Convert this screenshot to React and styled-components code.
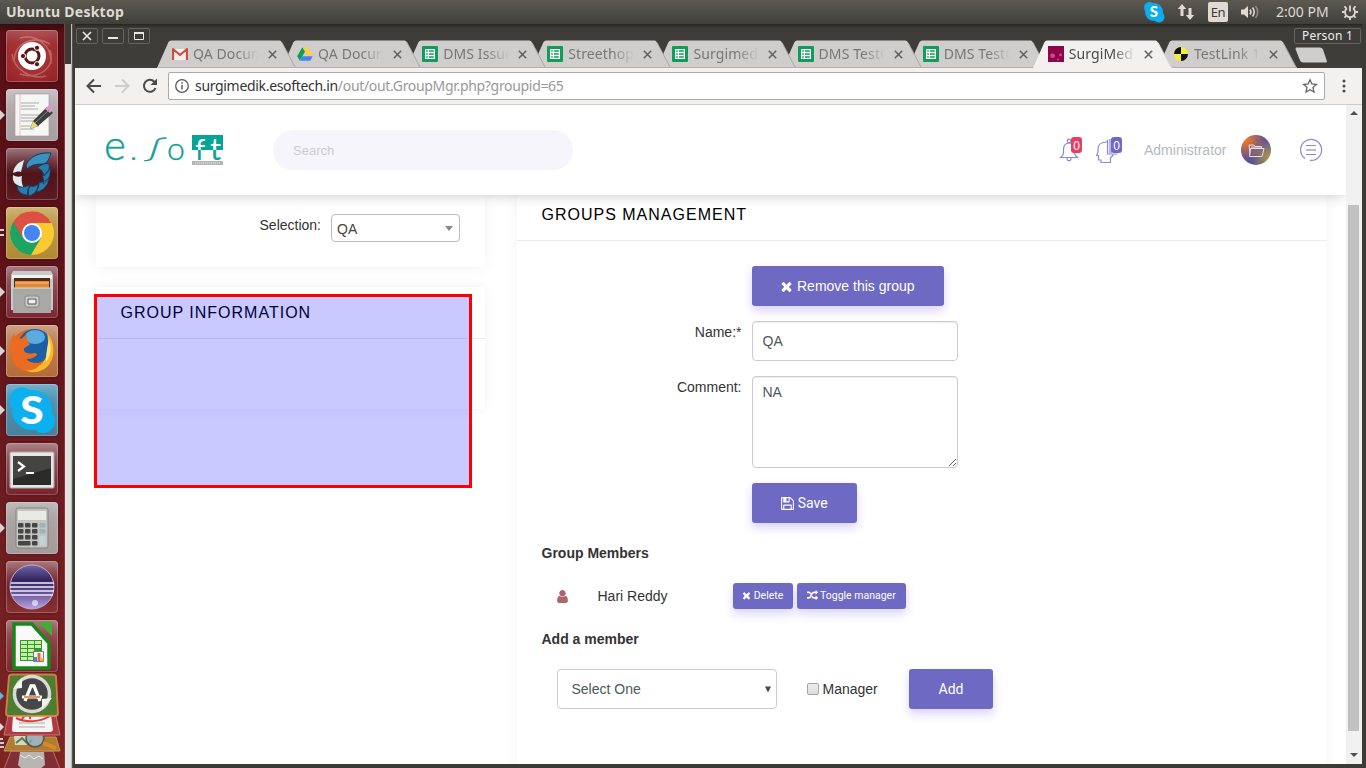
import React from 'react';
import styled, { createGlobalStyle, css } from 'styled-components';

const GlobalStyle = createGlobalStyle`
  * { box-sizing: border-box; }
  html, body, #root { height: 768px; margin: 0; overflow: hidden; }
  body { font-family: "Liberation Sans", Arial, sans-serif; font-size: 14px; line-height: 20px; color: #333; background: #3c3b37; }
  button, input, textarea, select { margin: 0; }
`;

const ui = css`font-family: "Noto Sans", "Open Sans", sans-serif;`;

/* ---------- desktop shell ---------- */
const Desktop = styled.div`
  width: 1366px; height: 768px; display: flex; flex-direction: column; overflow: hidden;
`;
const TopBar = styled.header`
  ${ui}
  flex: none; height: 24px; display: flex; align-items: center; padding: 0 7px 0 6px;
  background: linear-gradient(#5d5a4f, #57554e 15%, #403f3a);
  color: #dfdbd2; font-size: 14px; line-height: 24px;
`;
const BarTitle = styled.span`font-weight: 700; font-size: 14px; letter-spacing: 0.26px; white-space: nowrap;`;
const Tray = styled.div`margin-left: auto; display: flex; align-items: center; height: 24px;`;
const SkypeTray = styled.svg`width: 22px; height: 22px; margin-right: 12px;`;
const NetTray = styled.svg`width: 18px; height: 18px; margin-right: 13px;`;
const Lang = styled.span`
  width: 20px; height: 20px; border-radius: 2px; background: #dfdbd2; color: #3c3b37;
  font-size: 13px; line-height: 20px; text-align: center; margin-right: 12px; letter-spacing: -0.5px;
`;
const VolTray = styled.svg`width: 20px; height: 18px; margin-right: 16px;`;
const Clock = styled.span`width: 54px; font-size: 14px; letter-spacing: 0; white-space: nowrap; margin-right: 11px;`;
const GearTray = styled.svg`width: 18px; height: 18px;`;

const Below = styled.div`flex: 1; display: flex; min-height: 0;`;

/* ---------- launcher ---------- */
const Launcher = styled.nav`
  flex: none; width: 65px; height: 744px; padding: 6px 0 0 6px; display: flex; flex-direction: column;
  border-right: 1px solid #8c3a3b; overflow: hidden;
  background: linear-gradient(#3a0a0e, #5a1016 10px, #5b1118 200px, #681a1f 420px, #7f2423 744px);
`;
const Tile = styled.div`
  position: relative; flex: none; width: 52px; height: 52px; margin-bottom: 7px; border-radius: 4px;
  background: ${(p) => p.$bg};
  box-shadow: inset 0 0 0 1px rgba(255,255,255,.22), inset 0 14px 14px -8px rgba(255,255,255,.25), 0 0 3px rgba(0,0,0,.35);
`;
const Art = styled.svg`display: block; width: 52px; height: 52px;`;
const Pip = styled.i`
  position: absolute; left: -6px; top: 21px; border: 5px solid transparent; border-right: 0; border-left: 5px solid ${(p) => p.$c || '#d8d4d0'};
`;
const Bars = styled.i`
  position: absolute; left: -6px; top: 22px; width: 4px; height: 7px; border: solid #d8d4d0; border-width: 2px 0;
`;
const Folded = styled.svg`flex: none; display: block; width: 65px; height: 98px; margin: -8px 0 0 -6px;`;

/* ---------- window ---------- */
const Behind = styled.div`
  flex: none; width: 7px; background: linear-gradient(#3b3a36 0 40px, #e4e2e0 40px);
  border-right: 1px solid #bdbcba;
`;
const Window = styled.main`
  flex: 1; min-width: 0; display: flex; flex-direction: column; background: #3c3b37;
  padding: 0 4px 4px 2px; border-left: 1px solid #55534d;
`;
const TitleBar = styled.div`
  flex: none; height: 44px; display: flex; background: linear-gradient(#262522, #3d3c38 4px, #3e3d39);
`;
const Controls = styled.div`flex: none; width: 82px; display: flex; gap: 4px; padding: 4px 0 0 1px;`;
const Control = styled.span`
  width: 22px; height: 16px; border: 1px solid #65635c; border-radius: 2px; display: block;
  svg { display: block; width: 20px; height: 14px; }
`;
const Tabs = styled.div`flex: none; width: 1137px; display: flex; padding-top: 16px;`;
const Tab = styled.div`
  ${ui}
  position: relative; z-index: ${(p) => p.$z}; flex: none; width: 139px; height: 28px; margin-right: -13.9px;
  display: flex; align-items: center; padding-left: 15px; color: ${(p) => (p.$on ? '#4a4a4a' : '#777')};
`;
const TabShape = styled.svg`position: absolute; left: 0; top: 0; width: 139px; height: 28px; z-index: -1;`;
const Fav = styled.svg`flex: none; width: 16px; height: 16px;`;
const TabText = styled.span`
  flex: none; width: 67px; margin-left: 5px; font-size: 14px; line-height: 24px; letter-spacing: 0.1px; white-space: nowrap;
  mask-image: linear-gradient(90deg, #000 44px, transparent 66px);
`;
const Close = styled.svg`flex: none; width: 9px; height: 9px; margin-left: 8px;`;
const CapEnd = styled.div`flex: 1; display: flex; flex-direction: column; padding-top: 4px;`;
const Person = styled.span`
  ${ui}
  width: 67px; height: 16px; border: 1px solid #65635c; border-radius: 2px; color: #eee; font-size: 12px; line-height: 14px; text-align: center;
  white-space: nowrap; letter-spacing: .2px;
`;
const NewTab = styled.svg`width: 34px; height: 16px; margin-top: 3px;`;

const Toolbar = styled.div`
  ${ui}
  flex: none; height: 37px; display: flex; align-items: center; background: #f2f1f0; border-bottom: 1px solid #ccc;
  padding: 0 10px 0 10px;
`;
const NavIcon = styled.svg`flex: none; width: 18px; height: 18px; margin-right: 10px;`;
const Address = styled.div`
  flex: none; width: 1157px; height: 28px; border: 1px solid #a9a9a7; border-radius: 2px; background: #fff;
  display: flex; align-items: center; padding: 0 6px 0 5px; margin-left: -1px;
`;
const Url = styled.span`
  font-size: 14px; letter-spacing: -0.32px; color: #333; margin-left: 5px; flex: 1; white-space: nowrap;
  em { font-style: normal; color: #999; }
`;
const Menu = styled.svg`width: 4px; height: 16px; margin-left: 17px;`;

const View = styled.div`flex: 1; min-height: 0; display: flex; background: #fff;`;
const Page = styled.div`position: relative; flex: none; width: 1271px; display: flex; flex-direction: column; overflow: hidden; background: #fff;`;
const Scroll = styled.div`
  flex: 1; background: #f1f1f1; display: flex; flex-direction: column; align-items: center; padding: 6px 1px 7px 0;
`;
const Arrow = styled.i`
  flex: none; width: 0; height: 0; border: 4px solid transparent; border-${(p) => (p.$up ? 'top' : 'bottom')}: 0;
  border-${(p) => (p.$up ? 'bottom' : 'top')}: 4px solid #505050;
`;
const Thumb = styled.div`width: 11px; height: 526px; background: #c1c1c1; margin: 90px 0 auto;`;

/* ---------- page ---------- */
const Header = styled.header`
  position: relative; z-index: 2; flex: none; height: 90px; display: flex; align-items: center; background: #fff;
  padding: 0 24px 0 30px; box-shadow: 0 1px 12px rgba(0,0,0,.2);
`;
const Logo = styled.svg`flex: none; width: 120px; height: 34px;`;
const Search = styled.input`
  width: 300px; height: 40px; border: 0; border-radius: 20px; background: #f6f5fb; margin-left: 48px; padding: 0 20px;
  font: 13px "Liberation Sans", sans-serif; outline: 0;
  &::placeholder { color: #ccc; opacity: 1; }
`;
const Actions = styled.div`margin-left: auto; display: flex; align-items: center;`;
const Alert = styled.div`position: relative; width: 24px; height: 28px; margin-right: ${(p) => p.$gap}px;`;
const Line = styled.svg`display: block; width: 24px; height: 28px;`;
const Badge = styled.span`
  position: absolute; right: ${(p) => p.$r}px; top: 1px; width: 11px; height: 16px; border-radius: 3px; background: ${(p) => p.$c};
  color: #fff; font-size: 12px; line-height: 18px; text-align: center;
`;
const User = styled.span`width: 83px; color: #b4b9c0; font-size: 14px; margin-right: 14px;`;
const Avatar = styled.span`
  width: 30px; height: 30px; border-radius: 50%; margin-right: 28px;
  background: radial-gradient(circle at 15% 15%, #f57a22, rgba(245,122,34,0) 55%), radial-gradient(circle at 95% 75%, #b09a48, rgba(176,154,72,0) 50%), #5f5292;
  svg { display: block; width: 30px; height: 30px; }
`;
const MenuRing = styled.svg`width: 24px; height: 24px; margin-right: -1px;`;

const Content = styled.div`flex: 1; min-height: 0; display: flex; gap: 32px; padding-left: 21px; align-items: flex-start;`;
const Side = styled.div`width: 389px; display: flex; flex-direction: column; gap: 20px;`;
const Card = styled.section`
  width: ${(p) => p.$w}px; height: ${(p) => p.$h}px; background: #fff; box-shadow: 0 0 14px rgba(0,0,0,.055);
`;
const CardTitle = styled.h2`
  margin: 0; height: ${(p) => p.$h}px; padding: ${(p) => p.$t}px 24.5px 0; border-bottom: 1px solid #ebebf0;
  font-size: 16px; font-weight: 400; line-height: 20px; letter-spacing: 1px; color: #000; white-space: nowrap;
`;
const Picker = styled.div`display: flex; padding: 19px 25px 0 0; justify-content: flex-end; gap: 10px;`;
const PickLabel = styled.label`padding-top: 1px;`;
const Chosen = styled.div`
  width: 129px; height: 28px; border: 1px solid #bbb; border-radius: 4px; color: #444; padding: 4px 6px 0 5px; display: flex; justify-content: space-between;
  i { width: 0; height: 0; border: 4.5px solid transparent; border-top: 5px solid #888; border-bottom: 0; margin-top: 7px; }
  span { line-height: 20px; }
`;
const Body = styled.div`padding: 25px 24.5px;`;
const Field = styled.div`display: flex; margin-bottom: 15px; height: ${(p) => p.$h || 40}px;`;
const Label = styled.label`flex: none; width: 200px; margin-right: 10.5px; text-align: right; padding-top: 1px;`;
const control = css`
  border: 1px solid #ccc; border-radius: 4px; background: #fff; color: #4a5a5a; font: 14px/20px "Liberation Sans", sans-serif;
  box-shadow: inset 0 1px 1px rgba(0,0,0,.075); outline: 0;
`;
const Input = styled.input`${control} width: 206px; height: 40px; padding: 0 9.5px;`;
const Area = styled.textarea`${control} width: 206px; height: 92px; padding: 5px 9.5px; resize: both;`;
const Button = styled.button`
  flex: none; width: ${(p) => p.$w}px; height: ${(p) => (p.$small ? 26 : 40)}px; border: 0; border-radius: 3px;
  background: #6e6ac4; color: #fff; box-shadow: 0 5px 10px rgba(108,90,255,.26); padding: 0 ${(p) => p.$pr || 0}px ${(p) => (p.$small ? 1 : 0)}px 0;
  display: flex; align-items: center; justify-content: center; gap: ${(p) => (p.$small ? 2 : 2.5)}px; white-space: nowrap;
  font: ${(p) => (p.$small ? 10.5 : 14)}px ${(p) => (p.$link ? '"Liberation Sans"' : 'Roboto')}, sans-serif;
`;
const Glyph = styled.svg`flex: none; width: ${(p) => p.$s}px; height: ${(p) => p.$s}px; fill: ${(p) => p.$c || '#fff'};`;
const Heading = styled.h3`margin: 20px 0; font-size: 14px; line-height: 20px; font-weight: 700; color: #333;`;
const Member = styled.div`
  display: flex; align-items: center; height: 26px; padding-left: 13px;
`;
const MemberName = styled.span`width: 135.5px; margin-left: 28px;`;
const AddRow = styled.div`display: flex; align-items: center; height: 40px; padding-left: 15.5px;`;
const Select = styled.div`
  ${control} box-shadow: none; width: 220px; height: 40px; display: flex; align-items: center; justify-content: space-between; padding: 0 4.5px 0 13.5px;
  svg { width: 8px; height: 7px; }
`;
const Check = styled.span`
  width: 12px; height: 12px; margin: 0 4px 0 30px; border: 1px solid #a3a3a3; border-radius: 2px; background: linear-gradient(#ededed, #dcdcdc);
`;
const CheckText = styled.label`width: 86px; margin-left: -.5px; margin-right: .5px;`;
const Highlight = styled.div`
  position: absolute; z-index: 3; left: 19px; top: 189px; width: 378px; height: 194px; border: 3px solid #f00; background: rgba(0,0,255,.21);
  background-clip: padding-box;
`;

/* ---------- glyph data ---------- */
const TIMES = 'M1490 1322q0 40-28 68l-136 136q-28 28-68 28t-68-28l-294-294-294 294q-28 28-68 28t-68-28l-136-136q-28-28-28-68t28-68l294-294-294-294q-28-28-28-68t28-68l136-136q28-28 68-28t68 28l294 294 294-294q28-28 68-28t68 28l136 136q28 28 28 68t-28 68l-294 294 294 294q28 28 28 68z';
const FLOPPY = 'M512 1536h768v-384h-768v384zm896 0h128v-896q0-14-10-38.5t-20-34.5l-281-281q-10-10-34-20t-39-10v416q0 40-28 68t-68 28h-576q-40 0-68-28t-28-68v-416h-128v1280h128v-416q0-40 28-68t68-28h832q40 0 68 28t28 68v416zm-384-928v-320q0-13-9.5-22.5t-22.5-9.5h-192q-13 0-22.5 9.5t-9.5 22.5v320q0 13 9.5 22.5t22.5 9.5h192q13 0 22.5-9.5t9.5-22.5zm640 32v928q0 40-28 68t-68 28h-1344q-40 0-68-28t-28-68v-1344q0-40 28-68t68-28h928q40 0 88 20t76 48l280 280q28 28 48 76t20 88z';
const USER = 'M1536 1399q0 109-62.5 187t-150.5 78h-854q-88 0-150.5-78t-62.5-187q0-85 8.5-160.5t31.5-152 58.5-131 94-89 134.5-34.5q131 128 313 128t313-128q76 0 134.5 34.5t94 89 58.5 131 31.5 152 8.5 160.5zm-256-887q0 159-112.5 271.5t-271.5 112.5-271.5-112.5-112.5-271.5 112.5-271.5 271.5-112.5 271.5 112.5 112.5 271.5z';
const RANDOM = 'M666 481q-60 92-137 273-22-45-37-72.5t-40.5-63.5-51-56.5-63-35-81.5-14.5h-224q-14 0-23-9t-9-23v-192q0-14 9-23t23-9h224q250 0 410 225zm1126 799q0 14-9 23l-320 320q-9 9-23 9-13 0-22.5-9.5t-9.5-22.5v-192q-32 0-85 .5t-81 1-73-1-71-5-64-10.5-63-18.5-58-28.5-59-40-55-53.5-56-69.5q59-93 136-273 22 45 37 72.5t40.5 63.5 51 56.5 63 35 81.5 14.5h256v-192q0-14 9-23t23-9q12 0 24 10l319 319q9 9 9 23zm0-896q0 14-9 23l-320 320q-9 9-23 9-13 0-22.5-9.5t-9.5-22.5v-192h-256q-48 0-87 15t-69 45-51 61.5-45 77.5q-32 62-78 171-29 66-49.5 111t-54 105-64 100-74 83-90 68.5-106.5 42-128 16.5h-224q-14 0-23-9t-9-23v-192q0-14 9-23t23-9h224q48 0 87-15t69-45 51-61.5 45-77.5q32-62 78-171 29-66 49.5-111t54-105 64-100 74-83 90-68.5 106.5-42 128-16.5h256v-192q0-14 9-23t23-9q12 0 24 10l319 319q9 9 9 23z';

const FaGlyph = ({ d, s, c }) => <Glyph $s={s} $c={c} viewBox="0 0 1792 1792"><path d={d} /></Glyph>;

const favicons = {
  gmail: (
    <Fav viewBox="0 0 16 16">
      <rect x="1" y="3" width="14" height="11" rx="1" fill="#f1f1f1" />
      <path d="M1 14V3l7 6 7-6v11" fill="none" stroke="#d54b3d" strokeWidth="2.2" strokeLinejoin="round" />
    </Fav>
  ),
  drive: (
    <Fav viewBox="0 0 16 16">
      <path d="M5.3 1.2h5.3l5.2 9h-5.3z" fill="#ffcd40" />
      <path d="M5.3 1.2 8 5.8 2.8 14.8.2 10.2z" fill="#0f9d58" />
      <path d="M5.4 10.2h10.4l-2.6 4.6H2.8z" fill="#4285f4" />
    </Fav>
  ),
  sheet: (
    <Fav viewBox="0 0 16 16">
      <rect width="16" height="16" rx="1" fill="#0f9d58" />
      <path d="M3 3h10v10H3z" fill="#fff" />
      <path d="M4.2 4.2h1.6v1.6H4.2zM7 4.2h4.8v1.6H7zM4.2 7.2h1.6v1.6H4.2zM7 7.2h4.8v1.6H7zM4.2 10.2h1.6v1.6H4.2zM7 10.2h4.8v1.6H7z" fill="#0f9d58" />
    </Fav>
  ),
  surgi: (
    <Fav viewBox="0 0 16 16">
      <rect width="16" height="16" fill="#8f0548" />
      <circle cx="4.6" cy="9.8" r="2.4" fill="#c64a8c" />
      <circle cx="12.6" cy="8.8" r="1.5" fill="#c64a8c" />
      <circle cx="10" cy="13.4" r="1" fill="#c64a8c" />
    </Fav>
  ),
  testlink: (
    <Fav viewBox="0 0 16 16">
      <path d="M8 8V1a7 7 0 0 0-7 7z" fill="#111" />
      <path d="M8 8V1a7 7 0 0 1 7 7z" fill="#f6ee33" />
      <path d="M8 8v7a7 7 0 0 1-7-7z" fill="#f6ee33" />
      <path d="M8 8v7a7 7 0 0 0 7-7z" fill="#111" />
    </Fav>
  ),
};

const tabs = [
  ['gmail', 'QA Docum'], ['drive', 'QA Docum'], ['sheet', 'DMS Issue'], ['sheet', 'Streethop'], ['sheet', 'Surgimed'],
  ['sheet', 'DMS TestC'], ['sheet', 'DMS TestC'], ['surgi', 'SurgiMed', true], ['testlink', 'TestLink 1'],
];

const BrowserTab = ({ icon, text, on, z }) => (
  <Tab $on={on} $z={z}>
    <TabShape viewBox="0 0 139 28">
      <path d="M0 28L11.5 2Q12.5.5 14 .5H122.500Q124 .5 125 2.500L138 27L139 28Z" fill={on ? '#f2f1f0' : '#d0cecc'} />
      <path d="M125 2.500L138 27L139 28" fill="none" stroke={on ? '#d9d8d6' : '#a8a7a4'} />
      {!on && <path d="M0 27.500H139" stroke="#b2b1ae" />}
    </TabShape>
    {favicons[icon]}
    <TabText>{text}</TabText>
    <Close viewBox="0 0 9 9"><path d="M.8.8l7.400 7.400M8.200.8L.8 8.200" stroke="#5f5f5f" strokeWidth="1.500" /></Close>
  </Tab>
);

const LauncherItems = () => (
  <Launcher>
    <Tile $bg="radial-gradient(circle, #b8403f, #8f1f25)">
      <Art viewBox="0 0 52 52">
        <g fill="none" stroke="#fff" strokeOpacity=".25" strokeWidth="1.500">
          <path d="M8 32C8 14 26 4 44 14M44 20c6 18-12 30-30 24M14 8C30 4 46 14 45 34M6 24c2 16 20 26 34 22" />
        </g>
        <circle cx="26" cy="26" r="14" fill="#fff" />
        <circle cx="26" cy="26" r="7" fill="none" stroke="#5c1415" strokeWidth="3" />
        <g fill="#5c1415" stroke="#fff" strokeWidth="1"><circle cx="17" cy="26" r="2.600" /><circle cx="31" cy="17.800" r="2.600" /><circle cx="31" cy="34.200" r="2.600" /></g>
      </Art>
    </Tile>
    <Tile $bg="linear-gradient(#bcb2b4, #a79c9f)">
      <Pip />
      <Art viewBox="0 0 52 52">
        <rect x="9" y="5" width="34" height="42" fill="#f6f6f4" stroke="#999" strokeWidth=".6" />
        <path d="M14 5v42" stroke="#e8a0a0" strokeWidth=".6" />
        <path d="M15 14h18M15 17h14M15 20h17M15 26h19M15 29h15M15 32h12M15 37h18M15 40h13" stroke="#aaa" strokeWidth="1" />
        <path d="M24 40l3-8L41 18l6 6L32 37z" fill="#3e3e3e" />
        <path d="M24 40l3-8 5 5z" fill="#e9d77b" />
        <path d="M39 20l4-4q4-1 4 4l-3 4z" fill="#d99acb" />
        <path d="M29 34l14-13" stroke="#888" strokeWidth="1" />
      </Art>
    </Tile>
    <Tile $bg="linear-gradient(#86525a, #4f1419 50%, #5b1a21)">
      <Art viewBox="0 0 52 52">
        <path d="M20 17C24 8 34 4 45 5c-2 7-4 10-8 11-7 0-12 1-16 5z" fill="#3a91bf" stroke="#123c5c" />
        <path d="M31 20c5-4 8-5 12-4 1 6-1 9-5 12-1-5-3-7-7-8zM36 28c4-2 7-6 8-9 1 8-1 13-7 17 1-4 1-6-1-8zM33 35c4-1 8-3 10-5-1 8-6 13-13 14 2-3 3-6 3-9zM24 38c3 1 6 0 8-2 0 6-3 10-9 12-1-4-1-7 1-10zM11 38c4 2 8 1 13-1-3 5-3 8-2 10-5 0-10-2-11-9z" fill="#2a7cae" stroke="#123c5c" strokeWidth=".8" />
        <path d="M18 12c-7 3-10 7-11 13 3-1 5-2 8-1 1-4 2-8 3-12zM7 27c-1 7 2 10 10 12-1-4-2-7-1-11-3 1-6 1-9-1z" fill="#dfeaf0" />
      </Art>
    </Tile>
    <Tile $bg="linear-gradient(#c0a353, #b08a32)">
      <Bars />
      <Art viewBox="0 0 52 52">
        <circle cx="26" cy="26" r="22" fill="#fbc931" />
        <path d="M26 26L7 15A22 22 0 0 0 25 48l10-17z" fill="#1da362" />
        <path d="M26 16h19.500A22 22 0 0 0 7 15l10 16z" fill="#dd5144" />
        <circle cx="26" cy="26" r="10" fill="#fff" /><circle cx="26" cy="26" r="8" fill="#4285f4" />
      </Art>
    </Tile>
    <Tile $bg="linear-gradient(#925a62, #7c2633)">
      <Pip />
      <Art viewBox="0 0 52 52">
        <path d="M7 5h38l2 4v35H5V9z" fill="#c9c9c7" /><path d="M6 9h40v4H6z" fill="#f1f1ef" />
        <path d="M8 12h36v11H8z" fill="#4d2b18" /><path d="M9 15h34v7H9z" fill="#e28535" /><path d="M9 17h34" stroke="#f8c887" />
        <path d="M7 22h38v25H7z" fill="#a8a8a6" /><path d="M7 22h38" stroke="#ddd" />
        <rect x="19" y="30" width="14" height="11" rx="2" fill="#ccc" stroke="#888" /><path d="M22 33h8v5h-8z" fill="#eee" stroke="#555" />
      </Art>
    </Tile>
    <Tile $bg="linear-gradient(#c28c68, #b26c38)">
      <Pip />
      <Art viewBox="0 0 52 52">
        <circle cx="26" cy="26" r="22" fill="#e8641b" />
        <circle cx="29" cy="21" r="17" fill="#1c5fa5" /><ellipse cx="29" cy="12" rx="10" ry="7" fill="#5aabe0" />
        <path d="M41 8c8 8 9 24 1 33-7 7-17 8-25 3 12 1 20-4 23-12 2-8 3-14 1-24z" fill="#f8b82c" />
        <path d="M43 14c3 8 2 17-3 23 0-8 1-14 3-23z" fill="#fbe57a" />
        <path d="M8 8c0 4 4 4 7 6l6-5c-1 6 1 8 3 10-2 3-7 3-6 6 1 4 6 4 10 3 3 0 4 2 2 3-5 4-9 2-9 4 4 3 8 3 14 3-3 7-15 10-22 5C3 36 2 20 8 8z" fill="#ec6b23" />
      </Art>
    </Tile>
    <Tile $bg="linear-gradient(#4f9ec0, #4a7f98)">
      <Pip />
      <Art viewBox="0 0 52 52">
        <circle cx="26" cy="26" r="20" fill="#0bb0ee" /><circle cx="16" cy="16" r="12.500" fill="#0bb0ee" /><circle cx="37" cy="37" r="12" fill="#0bb0ee" />
        <text transform="translate(26 39.500) scale(1.120 1)" fontFamily="Lato, sans-serif" fontWeight="900" fontSize="38" textAnchor="middle" fill="#fff">S</text>
      </Art>
    </Tile>
    <Tile $bg="linear-gradient(#96626a, #7a232c)">
      <Art viewBox="0 0 52 52">
        <rect x="4" y="9" width="44" height="36" rx="1" fill="#e6e6e4" stroke="#aaa" /><path d="M7 13h38v29H7z" fill="#2b2b2a" />
        <path d="M7 13h38v12L7 36z" fill="#444442" />
        <path d="M12 19l6 4.500-6 4.500" fill="none" stroke="#fff" strokeWidth="2.200" /><path d="M20 30h8" stroke="#fff" strokeWidth="2" />
      </Art>
    </Tile>
    <Tile $bg="linear-gradient(#b0aaab, #a29a9b)">
      <Pip />
      <Art viewBox="0 0 52 52">
        <rect x="10" y="6" width="32" height="40" rx="2" fill="#c4c4c1" stroke="#85827f" />
        <path d="M12 9h28v9H12z" fill="#e8ebe4" />
        <g fill="#464646">
          {[21, 27, 33].map((y) => [12, 19, 26].map((x) => <rect key={`${x}-${y}`} x={x} y={y} width="5.500" height="4.500" rx="1" />))}
          <rect x="12" y="39" width="12.500" height="4.500" rx="1" /><rect x="26" y="39" width="5.500" height="4.500" rx="1" />
        </g>
        <g fill="#9fb1ba"><rect x="33.500" y="21" width="6" height="4.500" /><rect x="33.500" y="27" width="6" height="4.500" /><rect x="33.500" y="34" width="6" height="9.500" fill="#c3d2d8" /></g>
      </Art>
    </Tile>
    <Tile $bg="linear-gradient(#95585c, #70202a 50%, #8a3132)">
      <Art viewBox="0 0 52 52">
        <defs><linearGradient id="ecl" x1="0" y1="0" x2="0" y2="1"><stop offset="0" stopColor="#7267a5" /><stop offset=".35" stopColor="#30235c" /><stop offset=".6" stopColor="#5e4b94" /><stop offset="1" stopColor="#b7a4dd" /></linearGradient></defs>
        <circle cx="26" cy="26" r="22" fill="url(#ecl)" stroke="#bcaed6" />
        <path d="M5 22h43M4 26h44M4 30h44M6 34h41" stroke="#efeaf6" strokeWidth="1.300" />
        <circle cx="29" cy="42" r="3" fill="#fff" fillOpacity=".6" />
      </Art>
    </Tile>
    <Tile $bg="linear-gradient(#95585c, #7c2529)">
      <Art viewBox="0 0 52 52">
        <path d="M8 4h18l17 19v25H8z" fill="#fafafa" stroke="#18881b" strokeWidth="3.500" />
        <path d="M32 2h14v14z" fill="#42ad36" />
        <path d="M14 20h22v21H14z" fill="#2f9b28" />
        <path d="M15 21h6v3h-6zM22 21h6v3h-6zM29 21h6v3h-6zM15 25h6v3h-6zM22 25h6v3h-6zM29 25h6v3h-6zM15 29h6v3h-6zM22 29h6v3h-6zM15 33h6v3h-6zM22 33h6v3h-6zM15 37h6v3h-6zM22 37h6v3h-6z" fill="#c3f0a5" />
        <path d="M27.500 31.500h10v10h-10z" fill="#fff" stroke="#777" /><path d="M28 37h3v4h-3z" fill="#3a8ee0" /><path d="M31.500 33h3v8h-3z" fill="#e8662a" /><path d="M35 38h2.500v3H35z" fill="#eabb25" />
      </Art>
    </Tile>
    <Folded viewBox="0 0 65 98">
      <path d="M11 80h42l7 18H4z" fill="#803034" stroke="#b96a6c" />
      <path d="M20 81l24 0 1 13-5 4H22l-4-4z" fill="#b9b5b0" /><path d="M20 84l5 3 4-3 5 4 5-3 4 3" stroke="#eee" fill="none" />
      <path d="M10 66h46l4 14H4z" fill="#af7c32" stroke="#c59a57" />
      <path d="M14 65h28v9H15z" fill="#d6d5cb" /><path d="M16 72l6-5 6 6 4-4" stroke="#52823c" fill="none" strokeWidth="2" />
      <circle cx="35" cy="67" r="9" fill="#91a9b5" fillOpacity=".8" stroke="#555" strokeWidth="1.500" /><path d="M43 72l13 5" stroke="#d98a27" strokeWidth="3.500" />
      <path d="M8 45h48l4 19H4z" fill="#b03a42" stroke="#cf7474" />
      <path d="M13 44h38l2 15q-1 2-3 2H14q-2 0-2-2z" fill="#f4f4f2" /><path d="M19 52h26M19 56h26" stroke="#aaa" /><path d="M16 47c10 5 24 4 34-2M22 48c3-5 9-5 8 0" stroke="#dc3c3c" fill="none" strokeWidth="2" />
      <path d="M9 5q1-1.500 3-1.500h41q2 0 3 1.500l2 37q0 3-3 3H9q-3 0-3-3z" fill="#4d7d31" stroke="#e8864a" strokeOpacity=".85" strokeWidth="1.800" />
      <circle cx="32" cy="23" r="17.500" fill="#464646" stroke="#d9d9d5" strokeWidth="3.500" />
      <path d="M22 7v10l-9 1zM42 38V28l10-1z" fill="#f2f2ee" />
      <path d="M25 30l6-15h3l6 15" fill="none" stroke="#fff" strokeWidth="3.300" /><path d="M22 26h20" stroke="#fff" strokeWidth="3" /><path d="M24 26h16" stroke="#e8682b" strokeWidth="1.500" />
      <path d="M0 21l4 4-4 4z" fill="#5fb4e6" /><path d="M0 52l4 4-4 4z" fill="#ddd" />
      <path d="M0 67h3v2H0zM0 71h4v2H0zM0 75h4v2H0z" fill="#ccc" />
    </Folded>
  </Launcher>
);

export default function App() {
  return (
    <Desktop>
      <GlobalStyle />
      <TopBar>
        <BarTitle>Ubuntu Desktop</BarTitle>
        <Tray>
          <SkypeTray viewBox="0 0 22 22">
            <circle cx="11" cy="11" r="9" fill="#0caef0" /><circle cx="6.500" cy="6.500" r="5.500" fill="#0caef0" /><circle cx="16" cy="16" r="5.500" fill="#0caef0" />
            <text x="11" y="16" fontFamily="Lato, sans-serif" fontWeight="900" fontSize="15" textAnchor="middle" fill="#fff">S</text>
          </SkypeTray>
          <NetTray viewBox="0 0 18 18"><path d="M5 1L.8 6H3.500v7h3V6h2.700zM13 17l4.200-5h-2.700V5h-3v7H8.800z" fill="#dfdbd2" /></NetTray>
          <Lang>En</Lang>
          <VolTray viewBox="0 0 20 18">
            <path d="M1 6.500h3l4-3.500v12l-4-3.500H1z" fill="#dfdbd2" />
            <path d="M10 6.500q1.800 2.500 0 5M12.500 4.500q3.500 4.500 0 9" fill="none" stroke="#dfdbd2" strokeWidth="1.600" /><path d="M15.500 3q4.500 6 0 12" fill="none" stroke="#8b8880" strokeWidth="1.600" />
          </VolTray>
          <Clock>2:00 PM</Clock>
          <GearTray viewBox="0 0 18 18">
            <path d="M6 5.200a5 5 0 1 0 6 0" fill="none" stroke="#dfdbd2" strokeWidth="1.800" /><path d="M9 2.500v6" stroke="#dfdbd2" strokeWidth="1.800" />
            <path d="M3.400 3.400l1.800 1.800M14.600 3.400l-1.800 1.800M1 9h2.500M17 9h-2.500M3.400 14.600l1.800-1.800M14.600 14.600l-1.800-1.800M9 17v-2.500" stroke="#dfdbd2" strokeWidth="1.800" />
          </GearTray>
        </Tray>
      </TopBar>
      <Below>
        <LauncherItems />
        <Behind />
        <Window>
          <TitleBar>
            <Controls>
              <Control><svg viewBox="0 0 20 14"><path d="M6 3l8 8M14 3l-8 8" stroke="#e8e6e3" strokeWidth="1.700" /></svg></Control>
              <Control><svg viewBox="0 0 20 14"><path d="M5 9h10" stroke="#e8e6e3" strokeWidth="2" /></svg></Control>
              <Control><svg viewBox="0 0 20 14"><path d="M5.500 4v6.500h9V4z" fill="none" stroke="#e8e6e3" /><path d="M5 4h10" stroke="#e8e6e3" strokeWidth="2" /></svg></Control>
            </Controls>
            <Tabs>
              {tabs.map(([icon, text, on], i) => <BrowserTab key={i} icon={icon} text={text} on={on} z={on ? 20 : 10 - i} />)}
            </Tabs>
            <CapEnd>
              <Person>Person 1</Person>
              <NewTab viewBox="0 0 34 16"><path d="M2 .5h24q2 0 3 2l4 12q0 1-1 1H9q-2 0-3-2L1.500 2z" fill="#d0cecc" /></NewTab>
            </CapEnd>
          </TitleBar>
          <Toolbar>
            <NavIcon viewBox="0 0 18 18"><path d="M16 9H3M9 2.500L2.500 9 9 15.500" fill="none" stroke="#4a4a4a" strokeWidth="2" /></NavIcon>
            <NavIcon viewBox="0 0 18 18"><path d="M2 9h13M9 2.500L15.500 9 9 15.500" fill="none" stroke="#ccc" strokeWidth="2" /></NavIcon>
            <NavIcon viewBox="0 0 18 18"><path d="M14.500 11A6 6 0 1 1 13.300 4.700" fill="none" stroke="#4a4a4a" strokeWidth="2" /><path d="M16 1.500v6.500H9.500z" fill="#4a4a4a" /></NavIcon>
            <Address>
              <Fav viewBox="0 0 16 16"><circle cx="8" cy="8" r="6.300" fill="none" stroke="#5a5a5a" strokeWidth="1.300" /><path d="M8 7v4.500M8 4.200v1.600" stroke="#5a5a5a" strokeWidth="1.500" /></Fav>
              <Url>surgimedik.esoftech.in<em>/out/out.GroupMgr.php?groupid=65</em></Url>
              <Fav viewBox="0 0 16 16"><path d="M8 1.800l1.900 4.200 4.500.5-3.400 3 1 4.500L8 11.700 4 14l1-4.500-3.400-3 4.500-.5z" fill="none" stroke="#666" strokeWidth="1.300" /></Fav>
            </Address>
            <Menu viewBox="0 0 4 16"><circle cx="2" cy="3" r="1.500" fill="#4a4a4a" /><circle cx="2" cy="8" r="1.500" fill="#4a4a4a" /><circle cx="2" cy="13" r="1.500" fill="#4a4a4a" /></Menu>
          </Toolbar>
          <View>
            <Page>
              <Header>
                <Logo viewBox="0 0 120 34">
                  <rect x="87" y="2" width="31" height="15" fill="#06a497" /><rect x="87" y="28" width="31" height="4" fill="#b5b5b5" />
                  <path d="M90 30h26" stroke="#eee" strokeDasharray="1 1" />
                  <g fontFamily="Lato, sans-serif" fontWeight="300" fill="#14a096" stroke="#14a096" strokeWidth=".4">
                    <text transform="translate(-1 27) scale(1 1)" fontSize="42">e</text>
                    <text x="25" y="27" fontSize="30">.</text>
                    <text transform="translate(41 22.500) skewX(-18) scale(1.700 1)" fontFamily="DejaVu Sans" fontWeight="200" fontSize="24">ʃ</text>
                    <text x="62" y="27" fontSize="32">o</text>
                  </g>
                  <defs>
                    <linearGradient id="split" gradientUnits="userSpaceOnUse" x1="0" y1="0" x2="0" y2="34"><stop offset=".5" stopColor="#fff" /><stop offset=".5" stopColor="#14a096" /></linearGradient>
                  </defs>
                  <g fontFamily="Lato, sans-serif" fontWeight="400" fill="url(#split)">
                    <text x="90" y="27" fontSize="29">f</text><text x="105" y="27" fontSize="31">t</text>
                  </g>
                </Logo>
                <Search placeholder="Search" />
                <Actions>
                  <Alert $gap={13}>
                    <Line viewBox="0 0 24 28" fill="none" stroke="#8d89d2" strokeWidth="1.200">
                      <circle cx="10" cy="5" r="1.800" /><path d="M10 7c-4 0-5.500 3-5.500 7 0 5-.500 5-3 7.500h17c-2.500-2.500-3-2.500-3-7.500 0-4-1.500-7-5.500-7z" /><path d="M8 22q0 2.800 2 2.800t2-2.800" />
                    </Line>
                    <Badge $r={1} $c="#e83e62">0</Badge>
                  </Alert>
                  <Alert $gap={24}>
                    <Line viewBox="0 0 24 28" fill="none" stroke="#8d89d2" strokeWidth="1.200">
                      <path d="M11 6C5 6 2 9 2 13v3L.6 19.500H2.500V24H5v2.500h9.500V22l3-3.500" /><path d="M11.500 4v14h10M13.500 3v14" /><path d="M13 3h3v15h-3z" fill="#b8b4e4" stroke="none" />
                    </Line>
                    <Badge $r={-2} $c="#6e6ac4">0</Badge>
                  </Alert>
                  <User>Administrator</User>
                  <Avatar>
                    <svg viewBox="0 0 30 30" fill="none" stroke="#e3dde6"><path d="M9 19.500L8 10h5l1 1.500h6.500V13M9.500 13.500h13.500L21 21.500H8.500zM10 12h10" /></svg>
                  </Avatar>
                  <MenuRing viewBox="0 0 24 24" fill="none" stroke="#8d89d2" strokeWidth="1.200"><path d="M6 20.500A10.500 10.500 0 1 1 11 22.400M7 7.500h10M7 16.500h10" /><path d="M7 12h10" strokeWidth="1.800" stroke="#b4b1e2" /></MenuRing>
                </Actions>
              </Header>
              <Content>
                <Side>
                  <Card $w={389} $h={72}>
                    <Picker>
                      <PickLabel>Selection:</PickLabel>
                      <Chosen><span>QA</span><i /></Chosen>
                    </Picker>
                  </Card>
                  <Card $w={389} $h={122}><CardTitle $h={52} $t={16}>GROUP INFORMATION</CardTitle></Card>
                </Side>
                <Card $w={809} $h={620}>
                  <CardTitle $h={46} $t={10}>GROUPS MANAGEMENT</CardTitle>
                  <Body>
                    <Field><Label /><Button $w={192} $link $pr={2}><FaGlyph d={TIMES} s={15} />Remove this group</Button></Field>
                    <Field><Label>Name:*</Label><Input defaultValue="QA" /></Field>
                    <Field $h={92}><Label>Comment:</Label><Area defaultValue="NA" /></Field>
                    <Field><Label /><Button $w={105} $pr={1}><FaGlyph d={FLOPPY} s={15} />Save</Button></Field>
                    <Heading>Group Members</Heading>
                    <Member>
                      <FaGlyph d={USER} s={15} c="#b2626c" />
                      <MemberName>Hari Reddy</MemberName>
                      <Button $w={60} $small $pr={2}><FaGlyph d={TIMES} s={11} />Delete</Button>
                      <span>&nbsp;</span>
                      <Button $w={109} $small><FaGlyph d={RANDOM} s={11} />Toggle manager</Button>
                    </Member>
                    <Heading>Add a member</Heading>
                    <AddRow>
                      <Select>Select One<svg viewBox="0 0 8 7"><path d="M1 .5h6L4 6.500z" fill="#3a4f4a" /></svg></Select>
                      <Check /><CheckText>Manager</CheckText>
                      <Button $w={84}>Add</Button>
                    </AddRow>
                  </Body>
                </Card>
              </Content>
              <Highlight />
            </Page>
            <Scroll><Arrow $up /><Thumb /><Arrow /></Scroll>
          </View>
        </Window>
      </Below>
    </Desktop>
  );
}
